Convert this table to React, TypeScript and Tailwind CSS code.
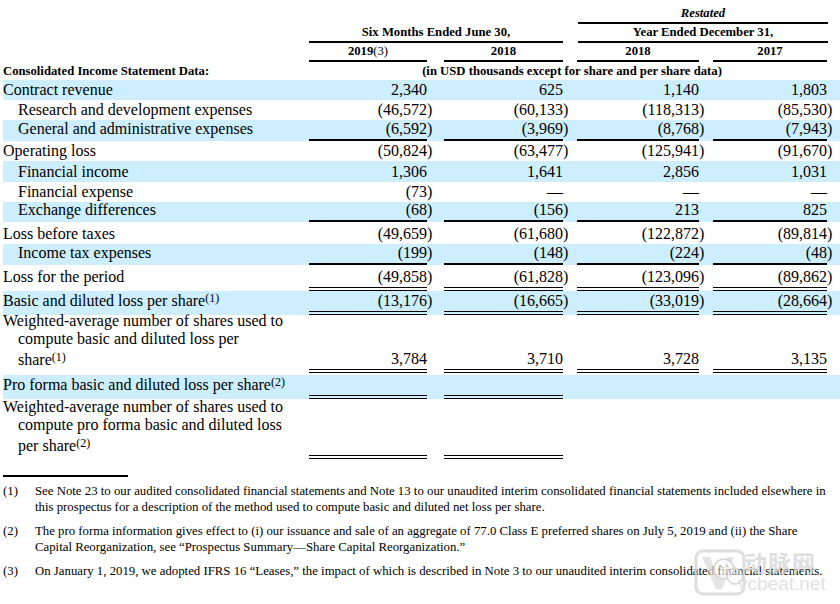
import clsx from 'clsx'

type Line = 'none' | 'single' | 'double'

interface DataRow {
  label: string[]
  sup?: string
  indent?: boolean
  band?: boolean
  h: string
  line?: Line
  lineCols?: number
  mb?: string
  vals: string[]
}

const cellPad = ['pl-[7px]', 'pl-[10px]', 'pl-[7px]', 'pl-[7px]']
const valW = ['w-[118px]', 'w-[119px]', 'w-[122px]', 'w-[114px]']
const parW = ['w-[7px]', 'w-[7px]', 'w-[7px]', 'w-[8px]']

const rows: DataRow[] = [
  { label: ['Contract revenue'], band: true, h: 'h-[20px]', vals: ['2,340', '625', '1,140', '1,803'] },
  { label: ['Research and development expenses'], indent: true, h: 'h-[20px]', vals: ['(46,572)', '(60,133)', '(118,313)', '(85,530)'] },
  { label: ['General and administrative expenses'], indent: true, band: true, h: 'h-[21px]', line: 'single', vals: ['(6,592)', '(3,969)', '(8,768)', '(7,943)'] },
  { label: ['Operating loss'], h: 'h-[20px]', vals: ['(50,824)', '(63,477)', '(125,941)', '(91,670)'] },
  { label: ['Financial income'], indent: true, band: true, h: 'h-[21px]', vals: ['1,306', '1,641', '2,856', '1,031'] },
  { label: ['Financial expense'], indent: true, h: 'h-[20px]', vals: ['(73)', '—', '—', '—'] },
  { label: ['Exchange differences'], indent: true, band: true, h: 'h-[20px]', line: 'single', vals: ['(68)', '(156)', '213', '825'] },
  { label: ['Loss before taxes'], h: 'h-[22px]', vals: ['(49,659)', '(61,680)', '(122,872)', '(89,814)'] },
  { label: ['Income tax expenses'], indent: true, band: true, h: 'h-[21px]', line: 'single', vals: ['(199)', '(148)', '(224)', '(48)'] },
  { label: ['Loss for the period'], h: 'h-[26px]', line: 'double', vals: ['(49,858)', '(61,828)', '(123,096)', '(89,862)'] },
  { label: ['Basic and diluted loss per share'], sup: '(1)', band: true, h: 'h-[24px]', line: 'double', vals: ['(13,176)', '(16,665)', '(33,019)', '(28,664)'] },
  {
    label: ['Weighted-average number of shares used to', 'compute basic and diluted loss per', 'share'],
    sup: '(1)',
    h: 'h-[58px]',
    line: 'double',
    mb: 'mb-[2px]',
    vals: ['3,784', '3,710', '3,728', '3,135'],
  },
  { label: ['Pro forma basic and diluted loss per share'], sup: '(2)', band: true, h: 'h-[24px]', line: 'double', lineCols: 2, vals: ['', '', '', ''] },
  {
    label: ['Weighted-average number of shares used to', 'compute pro forma basic and diluted loss', 'per share'],
    sup: '(2)',
    h: 'h-[60px]',
    line: 'double',
    lineCols: 2,
    vals: ['', '', '', ''],
  },
]

const footnotes = [
  {
    n: '(1)',
    lines: [
      'See Note 23 to our audited consolidated financial statements and Note 13 to our unaudited interim consolidated financial statements included elsewhere in',
      'this prospectus for a description of the method used to compute basic and diluted net loss per share.',
    ],
  },
  {
    n: '(2)',
    lines: [
      'The pro forma information gives effect to (i) our issuance and sale of an aggregate of 77.0 Class E preferred shares on July 5, 2019 and (ii) the Share',
      'Capital Reorganization, see \u201cProspectus Summary\u2014Share Capital Reorganization.\u201d',
    ],
  },
  {
    n: '(3)',
    lines: [
      'On January 1, 2019, we adopted IFRS 16 \u201cLeases,\u201d the impact of which is described in Note 3 to our unaudited interim consolidated financial statements.',
    ],
  },
]

function Sup({ children }: { children: React.ReactNode }) {
  return <span className="text-[12px] align-[4px]">{children}</span>
}

function lineClass(line: Line) {
  if (line === 'single') return 'border-b-2 border-black'
  if (line === 'double') return 'border-b-4 border-double border-black'
  return ''
}

function padClass(line: Line) {
  if (line === 'single') return 'pb-[2px]'
  if (line === 'double') return 'pb-[4px]'
  return ''
}

function ValueCell({ i, value, line }: { i: number; value: string; line: Line }) {
  const hasParen = value.endsWith(')')
  const main = hasParen ? value.slice(0, -1) : value
  return (
    <div className={clsx('flex', cellPad[i])}>
      <div className={clsx('flex items-end justify-end leading-[20px]', valW[i], lineClass(line))}>{main}</div>
      <div className={clsx('flex items-end leading-[20px]', parW[i], padClass(line))}>{hasParen ? ')' : ''}</div>
    </div>
  )
}

function TableRow({ r }: { r: DataRow }) {
  const line = r.line ?? 'none'
  const multi = r.label.length > 1
  return (
    <div className={clsx('flex', r.h, r.band && 'bg-[#cceeff]', r.mb)}>
      <div className={clsx('w-[299px] flex flex-col justify-end whitespace-nowrap', padClass(line), multi ? 'leading-[18px]' : 'leading-[20px]')}>
        {r.label.map((t, k) => (
          <div key={k} className={clsx((r.indent || k > 0) && 'pl-[15px]')}>
            {t}
            {k === r.label.length - 1 && r.sup && <Sup>{r.sup}</Sup>}
          </div>
        ))}
      </div>
      {r.vals.map((v, i) => (
        <ValueCell key={i} i={i} value={v} line={r.lineCols !== undefined && i >= r.lineCols ? 'none' : line} />
      ))}
    </div>
  )
}

// faint site watermark in the bottom-right corner
function Watermark() {
  return (
    <div className="absolute left-[694px] top-[549px] flex opacity-75">
      <svg width="54" height="48" viewBox="0 0 54 48" fill="none">
        <rect x="2" y="2" width="48" height="43" rx="7" stroke="#d2d2d2" strokeWidth="3" />
        <path d="M8 8 L22 40 L28 40 L40 8 L33 8 L25 30 L16 8 Z" fill="#dcdcdc" />
        <circle cx="30" cy="20" r="10" stroke="#c8c8c8" strokeWidth="1.5" fill="white" fillOpacity="0.6" />
        <circle cx="41" cy="27" r="8" stroke="#c8c8c8" strokeWidth="1.5" fill="white" fillOpacity="0.6" />
        <circle cx="26" cy="17" r="1.3" fill="#b8b8b8" />
        <circle cx="33" cy="17" r="1.3" fill="#b8b8b8" />
      </svg>
      <div className="flex flex-col -ml-[4px] pt-[1px]">
        <div className="font-['Noto_Sans_CJK_SC',sans-serif] text-[23px] font-bold leading-[24px] tracking-[1px] text-[#d4d4d4]">
          动脉网
        </div>
        <div className="font-['Liberation_Sans',sans-serif] text-[19px] leading-[20px] text-[#d8d8d8] -ml-[6px]">vcbeat.net</div>
      </div>
    </div>
  )
}

export default function App() {
  return (
    <div className="relative w-[840px] h-[604px] overflow-hidden bg-white pl-[3px] text-black font-['Liberation_Serif',serif] text-[16px]">
      {/* Column headers */}
      <div className="flex h-[24px] text-[12.7px] font-bold italic">
        <div className="w-[575px]" />
        <div className="flex w-[250px] items-end justify-center border-b-2 border-black leading-[16px] pb-[1px]">Restated</div>
      </div>
      <div className="flex h-[19px] text-[12.7px] font-bold">
        <div className="w-[306px]" />
        <div className="flex w-[254px] items-end justify-center border-b-2 border-black leading-[17px]">Six Months Ended June 30,</div>
        <div className="w-[15px]" />
        <div className="flex w-[250px] items-end justify-center border-b-2 border-black leading-[17px]">Year Ended December 31,</div>
      </div>
      <div className="flex h-[19px] text-[12.7px] font-bold">
        <div className="w-[299px]" />
        {['2019', '2018', '2018', '2017'].map((y, i) => (
          <div key={i} className={clsx('flex', cellPad[i])}>
            <div className={clsx('flex items-end justify-center border-b-2 border-black leading-[17px]', valW[i])}>
              {y}
              {i === 0 && <span className="font-normal">(3)</span>}
            </div>
            <div className={parW[i]} />
          </div>
        ))}
      </div>
      <div className="flex h-[18px] text-[12.7px] font-bold leading-[18px]">
        <div className="w-[306px] whitespace-nowrap">Consolidated Income Statement Data:</div>
        <div className="w-[526px] text-center whitespace-nowrap">(in USD thousands except for share and per share data)</div>
      </div>

      {/* Data rows */}
      {rows.map((r, k) => (
        <TableRow key={k} r={r} />
      ))}

      {/* Footnotes */}
      <div className="mt-[16px] w-[125px] border-t-2 border-black" />
      <div className="mt-[6px] flex flex-col gap-[8px] text-[12.8px] leading-[16px]">
        {footnotes.map((f) => (
          <div key={f.n} className="flex">
            <div className="w-[32px] shrink-0">{f.n}</div>
            <div className="whitespace-nowrap">
              {f.lines.map((l, k) => (
                <div key={k}>{l}</div>
              ))}
            </div>
          </div>
        ))}
      </div>

      <Watermark />
    </div>
  )
}
